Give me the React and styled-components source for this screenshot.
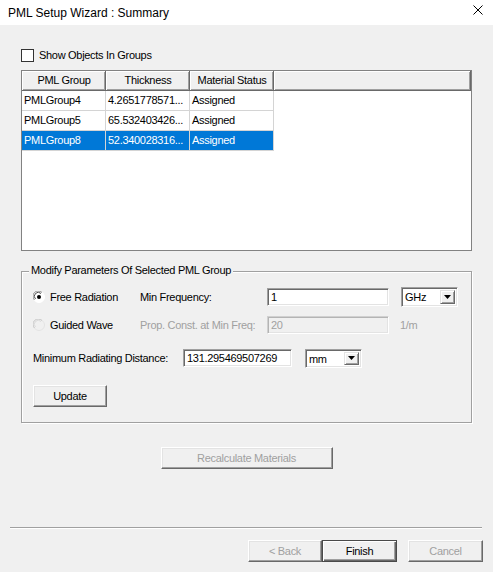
import React from 'react';
import styled, {createGlobalStyle, css} from 'styled-components';

const GlobalStyle = createGlobalStyle`
  html, body {
    margin: 0;
    padding: 0;
    overflow: hidden;
    background: #f0f0f0;
  }
  * {
    box-sizing: border-box;
  }
`;

const Window = styled.div`
  width: 493px;
  height: 572px;
  background: #f0f0f0;
  display: flex;
  flex-direction: column;
  font: 11px "Liberation Sans", Arial, sans-serif;
  letter-spacing: -0.3px;
  color: #000;
  overflow: hidden;
`;

const TitleBar = styled.div`
  height: 25px;
  flex: none;
  background: #fff;
  display: flex;
  align-items: center;
  justify-content: space-between;
  padding: 0 10px 0 8px;
  font: 12px "Liberation Sans", Arial, sans-serif;
  letter-spacing: 0;
`;

const CloseIcon = styled.svg`
  width: 10px;
  height: 10px;
  align-self: flex-start;
  margin-top: 5px;
`;

const Body = styled.div`
  padding: 0 21px;
  display: flex;
  flex-direction: column;
`;

const CheckRow = styled.label`
  margin-top: 24px;
  height: 13px;
  display: flex;
  align-items: center;
  gap: 5px;
  line-height: 13px;
`;

const CheckBox = styled.span`
  width: 13px;
  height: 13px;
  border: 1px solid #333;
  background: #fff;
`;

const Table = styled.div`
  margin-top: 8px;
  height: 181px;
  border: 1px solid #828282;
  background: #fff;
`;

const HeaderRow = styled.div`
  display: flex;
  height: 20px;
`;

const HeaderCell = styled.div`
  width: ${({w}) => (w ? `${w}px` : 'auto')};
  flex: ${({w}) => (w ? 'none' : 1)};
  background: #f0f0f0;
  text-align: center;
  line-height: 19px;
  box-shadow: inset -1px -1px #696969, inset 1px 1px #fff, inset -2px -2px #a0a0a0;
`;

const Row = styled.div`
  display: flex;
  height: 20px;
  width: 252px;
  ${({selected}) =>
    selected &&
    css`
      background: #0078d7;
      color: #fff;
    `}
`;

const Cell = styled.div`
  width: 84px;
  padding-left: 2px;
  line-height: 19px;
  white-space: nowrap;
  overflow: hidden;
  border-right: 1px solid #d4d4d4;
  border-bottom: 1px solid #d4d4d4;
`;

const GroupBox = styled.div`
  position: relative;
  margin-top: 20px;
  height: 152px;
  border: 1px solid #a0a0a0;
  box-shadow: inset 1px 1px #fff, 1px 1px #fff;
  padding: 15px 0 0 11px;
  display: flex;
  flex-direction: column;
`;

const GroupLabel = styled.span`
  position: absolute;
  top: -8px;
  left: 7px;
  padding: 0 2px;
  line-height: 13px;
  background: #f0f0f0;
`;

const ParamRow = styled.div`
  display: flex;
  align-items: center;
  height: 20px;
  margin-top: ${({gap}) => gap || 0}px;
`;

const Label = styled.span`
  width: ${({w}) => w}px;
  flex: none;
  display: flex;
  align-items: center;
  gap: 5px;
  color: ${({disabled}) => (disabled ? '#a0a0a0' : '#000')};
  white-space: nowrap;
`;

const Edit = styled.div`
  width: ${({w}) => w}px;
  height: 18px;
  flex: none;
  border: 1px solid;
  border-color: ${({disabled}) => (disabled ? '#d0d0d0 #fff #fff #d0d0d0' : '#a0a0a0 #fff #fff #a0a0a0')};
  box-shadow: ${({disabled}) =>
    disabled ? 'inset 1px 1px #b4b4b4, inset -1px -1px #e3e3e3' : 'inset 1px 1px #696969, inset -1px -1px #e3e3e3'};
  background: ${({disabled}) => (disabled ? '#f0f0f0' : '#fff')};
  color: ${({disabled}) => (disabled ? '#a0a0a0' : '#000')};
  padding-left: 3px;
  line-height: 16px;
  white-space: nowrap;
`;

const Combo = styled.div`
  width: 57px;
  height: ${({h}) => h}px;
  flex: none;
  margin-left: ${({gap}) => gap}px;
  display: flex;
  align-items: center;
  border: 1px solid;
  border-color: #a0a0a0 #fff #fff #a0a0a0;
  box-shadow: inset 1px 1px #696969, inset -1px -1px #e3e3e3;
  background: #fff;
  padding: 2px 2px 2px 3px;
`;

const ComboText = styled.span`
  flex: 1;
  padding-top: ${({drop}) => drop || 0}px;
`;

const ComboButton = styled.span`
  width: 15px;
  align-self: stretch;
  display: flex;
  align-items: center;
  justify-content: center;
  background: #f0f0f0;
  border: 1px solid;
  border-color: #e3e3e3 #696969 #696969 #e3e3e3;
  box-shadow: inset 1px 1px #fff, inset -1px -1px #a0a0a0;
`;

const Unit = styled.span`
  margin-left: 11px;
  color: #a0a0a0;
`;

const Button = styled.button`
  width: ${({w}) => w}px;
  height: 22px;
  flex: none;
  padding: 0;
  font: inherit;
  letter-spacing: inherit;
  color: ${({disabled}) => (disabled ? '#a0a0a0' : '#000')};
  background: #f0f0f0;
  border: 1px solid;
  border-color: #fff #696969 #696969 #fff;
  box-shadow: inset -1px -1px #a0a0a0, inset 1px 1px #e3e3e3;
  ${({primary}) =>
    primary &&
    css`
      border: 1px solid #4a4a4a;
      box-shadow: inset 1px 1px #fff, inset -1px -1px #696969, inset -2px -2px #a0a0a0;
    `}
`;

const UpdateButton = styled(Button)`
  margin-top: 17px;
`;

const RecalcButton = styled(Button)`
  margin: 24px auto 0;
`;

const Separator = styled.div`
  margin: 58px 11px 0 10px;
  border-top: 1px solid #a0a0a0;
  border-bottom: 1px solid #fff;
`;

const Footer = styled.div`
  display: flex;
  justify-content: flex-end;
  padding: 11px 10px 0 0;
`;

const FooterGap = styled.span`
  width: 11px;
`;

const Radio = ({checked, disabled}) => (
  <svg width="12" height="12" viewBox="0 0 12 12">
    <circle cx="6" cy="6" r="5.5" fill={disabled ? '#f0f0f0' : '#fff'} stroke={disabled ? '#e3e3e3' : '#fff'} />
    <path d="M1.5 9 A5 5 0 0 1 9 1.5" fill="none" stroke={disabled ? '#c8c8c8' : '#8a8a8a'} strokeWidth="1" />
    <path d="M2.5 8 A3.8 3.8 0 0 1 8 2.5" fill="none" stroke={disabled ? '#dcdcdc' : '#505050'} strokeWidth="1" />
    {checked && <circle cx="6" cy="6" r="2" fill="#000" />}
  </svg>
);

const Arrow = () => (
  <svg width="7" height="4" viewBox="0 0 7 4">
    <path d="M0 0 H7 L3.5 4 Z" fill="#000" />
  </svg>
);

const rows = [
  ['PMLGroup4', '4.2651778571...', 'Assigned'],
  ['PMLGroup5', '65.532403426...', 'Assigned'],
  ['PMLGroup8', '52.340028316...', 'Assigned'],
];

export default function App() {
  return (
    <Window>
      <GlobalStyle />
      <TitleBar>
        <span>PML Setup Wizard : Summary</span>
        <CloseIcon viewBox="0 0 10 10">
          <path d="M0.5 0.5 L9.5 9.5 M9.5 0.5 L0.5 9.5" stroke="#000" strokeWidth="1" />
        </CloseIcon>
      </TitleBar>
      <Body>
        <CheckRow>
          <CheckBox />
          Show Objects In Groups
        </CheckRow>
        <Table>
          <HeaderRow>
            <HeaderCell w={84}>PML Group</HeaderCell>
            <HeaderCell w={84}>Thickness</HeaderCell>
            <HeaderCell w={84}>Material Status</HeaderCell>
            <HeaderCell />
          </HeaderRow>
          {rows.map((r, i) => (
            <Row key={r[0]} selected={i === 2}>
              {r.map((c, j) => (
                <Cell key={j}>{c}</Cell>
              ))}
            </Row>
          ))}
        </Table>
        <GroupBox>
          <GroupLabel>Modify Parameters Of Selected PML Group</GroupLabel>
          <ParamRow>
            <Label w={107}>
              <Radio checked />
              Free Radiation
            </Label>
            <Label w={127}>Min Frequency:</Label>
            <Edit w={122}>1</Edit>
            <Combo h={20} gap={12}>
              <ComboText>GHz</ComboText>
              <ComboButton>
                <Arrow />
              </ComboButton>
            </Combo>
          </ParamRow>
          <ParamRow gap={8}>
            <Label w={107}>
              <Radio disabled />
              Guided Wave
            </Label>
            <Label w={127} disabled>
              Prop. Const. at Min Freq:
            </Label>
            <Edit w={122} disabled>
              20
            </Edit>
            <Unit>1/m</Unit>
          </ParamRow>
          <ParamRow gap={13}>
            <Label w={150}>Minimum Radiating Distance:</Label>
            <Edit w={109}>131.295469507269</Edit>
            <Combo h={19} gap={13}>
              <ComboText drop={2}>mm</ComboText>
              <ComboButton>
                <Arrow />
              </ComboButton>
            </Combo>
          </ParamRow>
          <UpdateButton w={74}>Update</UpdateButton>
        </GroupBox>
        <RecalcButton w={172} disabled>
          Recalculate Materials
        </RecalcButton>
      </Body>
      <Separator />
      <Footer>
        <Button w={74} disabled>
          &lt; Back
        </Button>
        <Button w={75} primary>
          Finish
        </Button>
        <FooterGap />
        <Button w={75} disabled>
          Cancel
        </Button>
      </Footer>
    </Window>
  );
}
